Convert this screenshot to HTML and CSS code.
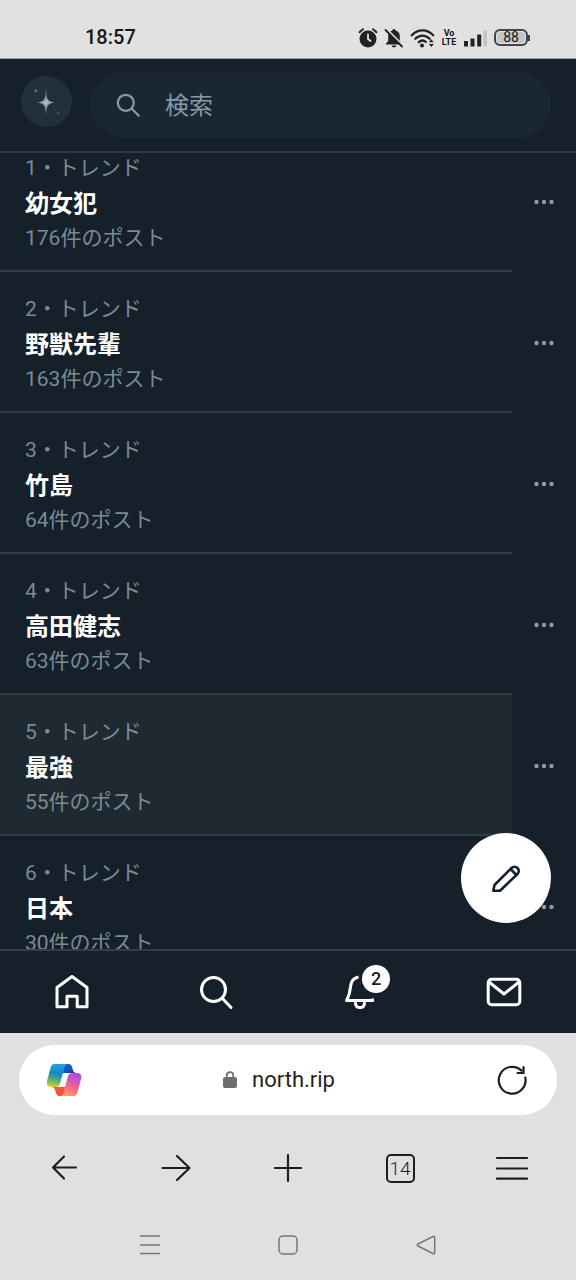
FILE: index.html
```html
<!DOCTYPE html>
<html lang="ja">
<head>
<meta charset="utf-8">
<meta name="viewport" content="width=device-width, initial-scale=1">
<title>トレンド</title>
<link rel="stylesheet" href="styles.css">
</head>
<body>
<div class="screen">
  <div class="status">
    <time class="clock">18:57</time>
    <div class="status-icons">
      <svg width="20" height="22" viewBox="0 0 20 22"><circle cx="10" cy="12" r="8.500" fill="#222"/><path d="M1.500 5.200 5 2.200M18.500 5.200 15 2.200" stroke="#222" stroke-width="2" stroke-linecap="round"/><path d="M10 7.500V12l2.500 2" fill="none" stroke="#e1e1e1" stroke-width="1.800" stroke-linecap="round"/></svg>
      <svg width="20" height="22" viewBox="0 0 20 22"><path d="M10 2c1 0 1.500.7 1.500 1.600 2.800.7 4.300 2.900 4.300 5.900v4.500l2.200 2.500v1H2v-1L4.200 14V9.500c0-3 1.500-5.200 4.300-5.900C8.500 2.700 9 2 10 2zM7.700 18.500h4.600a2.300 2 0 0 1-4.600 0z" fill="#222"/><path d="m3 2.500 16 16" stroke="#e1e1e1" stroke-width="2"/><path d="m1.500 3 16.500 16.500" stroke="#222" stroke-width="1.800" stroke-linecap="round"/></svg>
      <svg width="26" height="22" viewBox="0 0 26 22"><g fill="none" stroke="#222" stroke-width="2.300" stroke-linecap="round"><path d="M1.800 8.300c6-6.600 15.400-6.600 21.400 0"/><path d="M5.300 11.800c4.200-4.300 10.200-4.300 14.400 0"/><path d="M8.800 15.200c2.200-2.100 4.800-2.200 7-.4"/></g><circle cx="12" cy="18.500" r="2" fill="#222"/><path d="m21.300 12.200 2.500 3.100h-5zM21.300 20l2.500-3h-5z" fill="#222"/></svg>
      <span class="volte">Vo<br>LTE</span>
      <svg width="26" height="22" viewBox="0 0 26 22"><path d="M2 14h4v5.500H2zM8.500 11.500h4v8h-4zM15.200 7.500h4v12h-4z" fill="#222"/><path d="M21.500 3.500h3.500v16h-3.500z" fill="#c2c2c2"/></svg>
      <span class="battery">88</span>
    </div>
  </div>

  <div class="app">
    <header class="top">
      <button class="avatar" aria-label="アカウント">
        <svg width="51" height="51" viewBox="0 0 52 52"><path d="M25.500 13c.4 10 1 13 8.500 14-7.500 1-8.100 4-8.500 13-.4-9-1-12-8.500-13 7.500-1 8.100-4 8.500-14z" fill="#99a5ae"/><circle cx="25.500" cy="27" r="2" fill="#b4bec5"/><circle cx="15" cy="15" r="1.200" fill="#74818a"/><circle cx="38" cy="38" r="1" fill="#59666f"/></svg>
      </button>
      <label class="search">
        <svg width="24" height="24" viewBox="0 0 24 24" fill="none" stroke="#8899a6" stroke-width="2.200" stroke-linecap="round"><circle cx="9.800" cy="9.800" r="8"/><path d="m15.800 15.800 7 7"/></svg>
        <input type="search" placeholder="検索" aria-label="検索">
      </label>
    </header>

    <main class="content">
      <ol class="trends">
        <li class="trend"><a class="trend-link" href="#t1"><span class="meta">1・トレンド</span><strong class="name">幼女犯</strong><span class="meta">176件のポスト</span></a><button class="more" aria-label="その他"><svg width="20" height="6" viewBox="0 0 20 6"><circle cx="2.500" cy="3" r="2.200"/><circle cx="10" cy="3" r="2.200"/><circle cx="17.500" cy="3" r="2.200"/></svg></button></li>
        <li class="trend"><a class="trend-link" href="#t2"><span class="meta">2・トレンド</span><strong class="name">野獣先輩</strong><span class="meta">163件のポスト</span></a><button class="more" aria-label="その他"><svg width="20" height="6" viewBox="0 0 20 6"><circle cx="2.500" cy="3" r="2.200"/><circle cx="10" cy="3" r="2.200"/><circle cx="17.500" cy="3" r="2.200"/></svg></button></li>
        <li class="trend"><a class="trend-link" href="#t3"><span class="meta">3・トレンド</span><strong class="name">竹島</strong><span class="meta">64件のポスト</span></a><button class="more" aria-label="その他"><svg width="20" height="6" viewBox="0 0 20 6"><circle cx="2.500" cy="3" r="2.200"/><circle cx="10" cy="3" r="2.200"/><circle cx="17.500" cy="3" r="2.200"/></svg></button></li>
        <li class="trend"><a class="trend-link" href="#t4"><span class="meta">4・トレンド</span><strong class="name">高田健志</strong><span class="meta">63件のポスト</span></a><button class="more" aria-label="その他"><svg width="20" height="6" viewBox="0 0 20 6"><circle cx="2.500" cy="3" r="2.200"/><circle cx="10" cy="3" r="2.200"/><circle cx="17.500" cy="3" r="2.200"/></svg></button></li>
        <li class="trend"><a class="trend-link active" href="#t5"><span class="meta">5・トレンド</span><strong class="name">最強</strong><span class="meta">55件のポスト</span></a><button class="more" aria-label="その他"><svg width="20" height="6" viewBox="0 0 20 6"><circle cx="2.500" cy="3" r="2.200"/><circle cx="10" cy="3" r="2.200"/><circle cx="17.500" cy="3" r="2.200"/></svg></button></li>
        <li class="trend"><a class="trend-link" href="#t6"><span class="meta">6・トレンド</span><strong class="name">日本</strong><span class="meta">30件のポスト</span></a><button class="more" aria-label="その他"><svg width="20" height="6" viewBox="0 0 20 6"><circle cx="2.500" cy="3" r="2.200"/><circle cx="10" cy="3" r="2.200"/><circle cx="17.500" cy="3" r="2.200"/></svg></button></li>
      </ol>
      <button class="compose" aria-label="ポストする">
        <svg width="32" height="32" viewBox="0 0 32 32" fill="none" stroke="#15202b" stroke-width="2.600" stroke-linejoin="round"><path d="M3.300 28.700 4.500 23 21.500 6a4.200 4.200 0 0 1 6 6L10 28.700z"/><path d="m20 6.500 6.500 6.500"/></svg>
      </button>
    </main>

    <nav class="tabs">
      <a class="tab" href="#home" aria-label="ホーム"><svg width="36" height="36" viewBox="0 0 36 36" fill="none" stroke="#fff" stroke-width="3" stroke-linejoin="round"><path d="M18 2.500 33 13.500v19.300H23.200V22.300H13v10.500H3V13.500z"/></svg></a>
      <a class="tab" href="#search" aria-label="検索"><svg width="36" height="36" viewBox="0 0 36 36" fill="none" stroke="#fff" stroke-width="3" stroke-linecap="round"><circle cx="15.500" cy="15.500" r="12"/><path d="m24.500 24.500 8.500 9"/></svg></a>
      <a class="tab" href="#notifications" aria-label="通知 2件"><span class="bell"><svg width="36" height="36" viewBox="0 0 36 36" fill="none" stroke="#fff" stroke-width="3" stroke-linejoin="round"><path d="M16.500 3C10.500 4 9 8 8.500 12.500 8 19 7 22 4.500 26.500h26.200L30 24.500"/><path d="M13.500 29.300c.6 5.600 8.400 5.600 9 0" stroke-linecap="round"/></svg><span class="badge">2</span></span></a>
      <a class="tab" href="#messages" aria-label="メッセージ"><svg width="36" height="36" viewBox="0 0 36 36" fill="none" stroke="#fff" stroke-width="3" stroke-linejoin="round"><rect x="2.200" y="5.200" width="31.600" height="25.600" rx="3.500"/><path d="m3 8 15 12L33 8"/></svg></a>
    </nav>
  </div>

  <footer class="browser">
    <div class="address">
      <button class="icon-button" aria-label="Copilot">
        <svg width="36" height="34" viewBox="0 0 36 34">
          <defs>
            <linearGradient id="left" x1=".4" y1="0" x2=".2" y2="1"><stop offset="0" stop-color="#20a0e5"/><stop offset=".4" stop-color="#1688c0"/><stop offset=".7" stop-color="#5ab56a"/><stop offset="1" stop-color="#e5d01d"/></linearGradient>
            <linearGradient id="right" x1=".7" y1="0" x2=".3" y2="1"><stop offset="0" stop-color="#a64bea"/><stop offset=".5" stop-color="#ee5d9c"/><stop offset="1" stop-color="#ff9c64"/></linearGradient>
            <linearGradient id="fold" x1="0" y1="0" x2="1" y2="1"><stop offset="0" stop-color="#1668d8"/><stop offset="1" stop-color="#173b9f"/></linearGradient>
            <linearGradient id="base" x1="0" y1="0" x2="1" y2="1"><stop offset="0" stop-color="#e7613e"/><stop offset="1" stop-color="#f04c38"/></linearGradient>
          </defs>
          <path d="M17 1h5.500c2 0 3 1.300 3.500 3l1 3c.5 1.800 1.500 3 3.500 3H17z" fill="url(#fold)"/>
          <path d="M19 33h-5.500c-2 0-3-1.300-3.500-3l-1-3c-.5-1.800-1.500-3-3.500-3H19z" fill="url(#base)"/>
          <path d="M8.500 1H22c-2 0-3 1.500-3.600 3.500l-4.200 16C13.500 23 12 24 9.500 24H5C1.500 24 0 21.500 1 18L4.500 5C5.200 2.500 6.500 1 8.500 1z" fill="url(#left)"/>
          <path d="M27.500 33H14c2 0 3-1.500 3.600-3.500l4.200-16C22.500 11 24 10 26.500 10H31c3.500 0 5 2.500 4 6l-3.500 13c-.7 2.500-2 4-4 4z" fill="url(#right)"/>
          <path d="M18.500 10h5c-1 .7-1.500 1.800-1.800 3l-2.400 9c-.4 1.300-1 2-2.300 2h-4.500c1-.7 1.500-1.800 1.800-3l2.400-9c.3-1.200.8-2 1.800-2z" fill="#fff"/>
        </svg>
      </button>
      <a class="site" href="#site"><svg width="14" height="18" viewBox="0 0 14 18"><rect y="6" width="14" height="11" rx="2" fill="#6e6e6e"/><path d="M3.800 7V4.300a3.200 3.200 0 0 1 6.400 0V7" fill="none" stroke="#6e6e6e" stroke-width="1.700"/></svg><span>north.rip</span></a>
      <button class="icon-button" aria-label="再読み込み"><svg width="32" height="32" viewBox="0 0 32 32" fill="none" stroke="#1f1f1f" stroke-width="2.200" stroke-linecap="round"><path d="M29.300 13.500A13.400 13.400 0 1 1 25.500 6.600"/><path d="M27.500 3v6H21.500"/></svg></button>
    </div>
    <div class="toolbar">
      <button class="tool" aria-label="戻る"><svg width="32" height="32" viewBox="0 0 32 32"><path d="M28 15.500H5M16 4.500l-11 11 11 11"/></svg></button>
      <button class="tool" aria-label="進む"><svg width="32" height="32" viewBox="0 0 32 32"><path d="M2.500 16H29M17 4l12.500 12L17 28"/></svg></button>
      <button class="tool" aria-label="新しいタブ"><svg width="32" height="32" viewBox="0 0 32 32"><path d="M3 16h26M16 3v26"/></svg></button>
      <button class="tool"><span class="tab-count">14</span></button>
      <button class="tool" aria-label="メニュー"><svg width="34" height="32" viewBox="0 0 34 32"><path d="M2 6h30M2 16.500h30M2 26.700h30"/></svg></button>
    </div>
    <div class="system">
      <button class="key" aria-label="履歴"><svg width="22" height="22" viewBox="0 0 22 22"><path d="M1 2h20M1 11h20M1 19.500h20"/></svg></button>
      <button class="key" aria-label="ホーム画面"><svg width="22" height="22" viewBox="0 0 22 22"><rect x="2" y="2" width="18" height="18" rx="4"/></svg></button>
      <button class="key" aria-label="前の画面"><svg width="22" height="22" viewBox="0 0 22 22"><path d="M18 2.500 3 10c-1 .6-1 1.500 0 2l15 7.500c1 .4 1.700 0 1.700-1V3.500c0-1-.7-1.400-1.700-1z"/></svg></button>
    </div>
  </footer>
</div>
</body>
</html>
```

FILE: styles.css
```css
* {
  box-sizing: border-box;
}

body {
  margin: 0;
  font-family: Roboto, "Noto Sans CJK JP", sans-serif;
  background: #e0e0e0;
}

svg {
  display: block;
  flex: none;
}

button {
  display: flex;
  align-items: center;
  justify-content: center;
  padding: 0;
  border: 0;
  background: none;
  color: inherit;
  font: inherit;
}

a {
  color: inherit;
  text-decoration: none;
}

.screen {
  display: flex;
  flex-direction: column;
  height: 100vh;
}

/* Phone status bar */
.status {
  display: flex;
  align-items: center;
  justify-content: space-between;
  padding: 23px 44px 6px 85px;
  border-bottom: 1px solid #9aa0a5;
  background: #e1e1e1;
  color: #161616;
}

.clock {
  font-size: 20px;
  font-weight: 500;
  line-height: 29px;
}

.status-icons {
  display: flex;
  align-items: center;
  gap: 6px;
}

.volte {
  display: flex;
  flex-direction: column;
  align-items: center;
  justify-content: center;
  width: 14px;
  font-size: 9px;
  font-weight: 700;
  line-height: 9px;
  text-align: center;
}

.battery {
  position: relative;
  width: 34px;
  margin-right: 4px;
  border: 2px solid #444;
  border-radius: 6px;
  background: #c6c6c6;
  box-shadow: inset 0 0 0 1px #e1e1e1;
  font-size: 14px;
  line-height: 13px;
  text-align: center;
}

.battery::after {
  content: "";
  position: absolute;
  top: 4px;
  right: -4px;
  width: 2px;
  height: 6px;
  background: #444;
}

/* App */
.app {
  display: flex;
  flex: 1;
  flex-direction: column;
  min-height: 0;
  background: #15202a;
  color: #fff;
}

.top {
  display: flex;
  align-items: flex-start;
  gap: 18px;
  padding: 13px 25px 13px 21px;
  border-bottom: 2px solid #2d3943;
}

.avatar {
  flex: none;
  margin-top: 4px;
  border-radius: 50%;
  background: #22303a;
}

.search {
  display: flex;
  flex: 1;
  align-items: center;
  gap: 25px;
  min-width: 0;
  padding: 15px 26px;
  border-radius: 33px;
  background: #1a2733;
}

.search input {
  flex: 1;
  min-width: 0;
  height: 36px;
  padding: 2px 0 0;
  border: 0;
  outline: 0;
  background: none;
  color: #fff;
  font: inherit;
  font-size: 24px;
}

.search input::placeholder {
  color: #8899a6;
  opacity: 1;
}

.content {
  position: relative;
  flex: 1;
  min-height: 0;
  overflow: hidden;
}

/* The list rests slightly scrolled under the header */
.trends {
  margin: -22px 0 0;
  padding: 0;
  list-style: none;
}

.trend {
  display: flex;
}

.trend-link {
  flex: 1;
  padding: 20px 25px 14px;
  border-bottom: 2px solid #2f3b45;
}

.trend-link.active {
  background: #1e2932;
}

.meta,
.name {
  display: block;
}

.meta {
  color: #7c8a95;
  font-size: 21px;
  line-height: 35px;
}

.name {
  padding-top: 2px;
  font-size: 24px;
  font-weight: 700;
  line-height: 33px;
}

.more {
  width: 64px;
}

.more svg {
  fill: #8f9ba5;
}

.compose {
  position: absolute;
  right: 25px;
  bottom: 26px;
  width: 90px;
  height: 90px;
  border-radius: 50%;
  background: #fff;
}

.tabs {
  display: grid;
  grid-template-columns: repeat(4, 1fr);
  border-top: 2px solid #323e48;
}

.tab {
  display: flex;
  justify-content: center;
  padding: 23px 0;
}

.bell {
  position: relative;
}

.badge {
  position: absolute;
  top: -9px;
  left: 20px;
  width: 28px;
  border-radius: 14px;
  background: #fff;
  color: #15202a;
  font-size: 18px;
  font-weight: 500;
  line-height: 28px;
  text-align: center;
}

/* Browser controls */
.browser {
  padding: 12px 0 11px;
  background: #e0e0e0;
  color: #1f1f1f;
}

.address {
  display: grid;
  grid-template-columns: 1fr auto 1fr;
  align-items: center;
  margin: 0 19px;
  padding: 0 29px 0 27px;
  border-radius: 35px;
  background: #fff;
}

.address .icon-button:first-child {
  justify-self: start;
}

.address .icon-button:last-child {
  justify-self: end;
}

.site {
  display: flex;
  align-items: center;
  gap: 15px;
  padding-right: 16px;
  font-size: 22px;
  line-height: 70px;
}

.toolbar {
  display: grid;
  grid-template-columns: repeat(5, 1fr);
  padding: 0 8px;
}

.tool {
  height: 106px;
}

.tool svg {
  fill: none;
  stroke: #1f1f1f;
  stroke-width: 2.2;
  stroke-linecap: round;
  stroke-linejoin: round;
}

.tab-count {
  width: 29px;
  border: 2px solid #1f1f1f;
  border-radius: 5px;
  font-size: 19px;
  font-weight: 300;
  line-height: 25px;
  text-align: center;
}

.system {
  display: grid;
  grid-template-columns: repeat(3, 1fr);
  padding: 0 81px;
}

.key {
  height: 48px;
}

.key svg {
  fill: none;
  stroke: #777;
  stroke-width: 1.5;
}
```
